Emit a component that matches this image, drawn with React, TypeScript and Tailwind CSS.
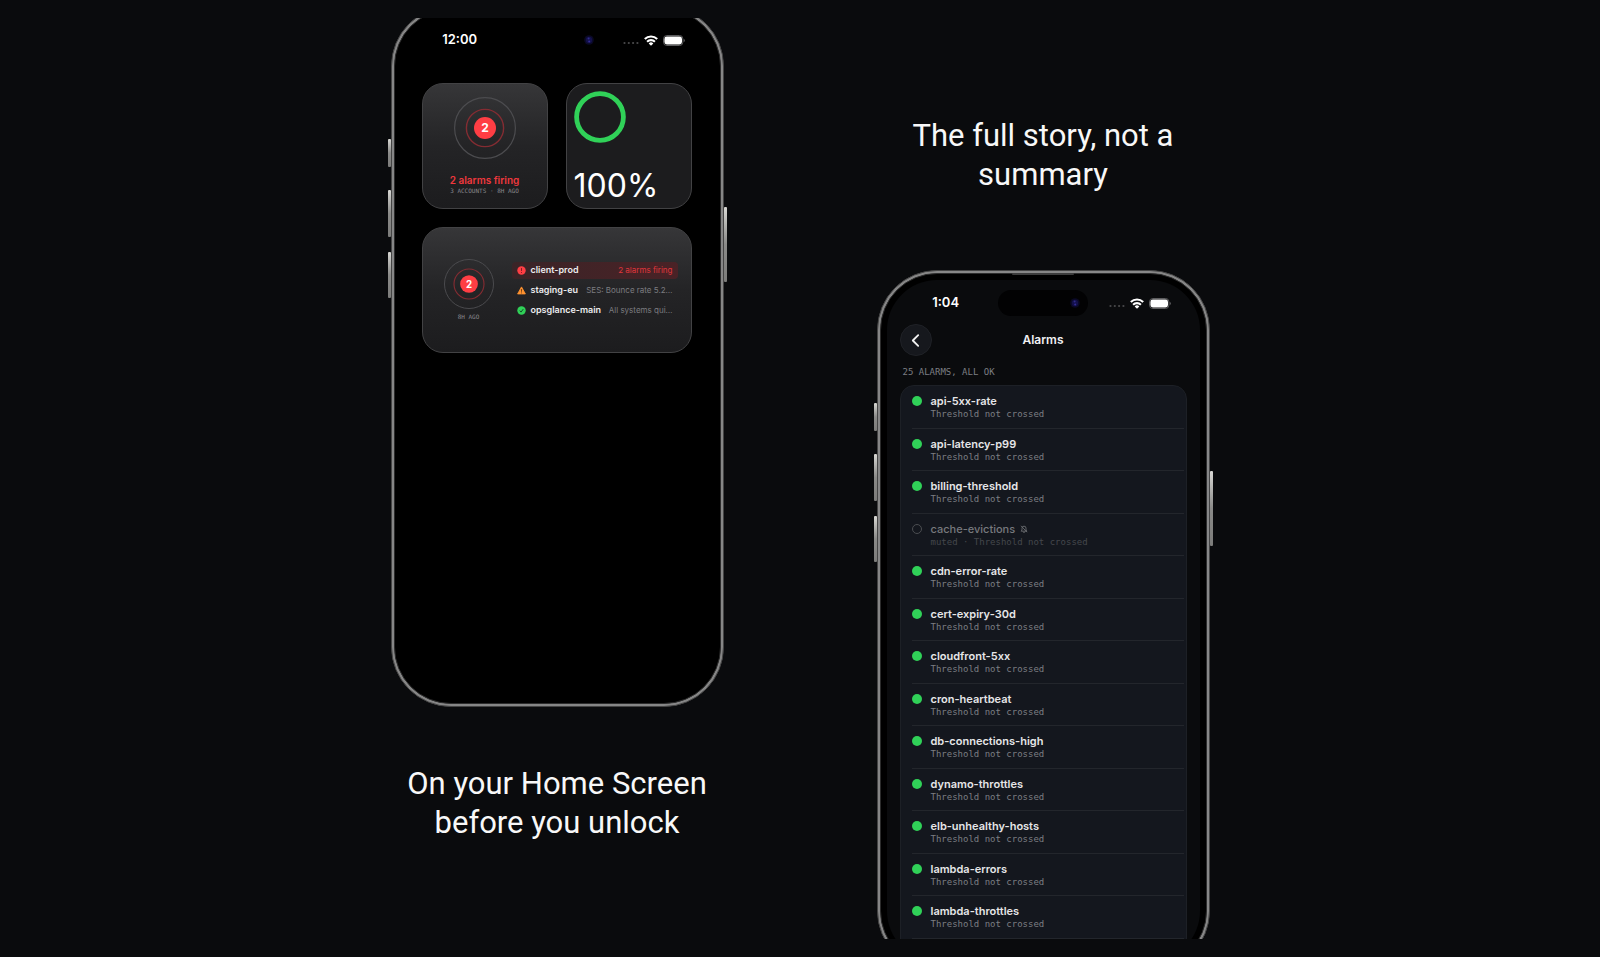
import type { ReactNode } from "react";

const alarms = [
  "api-5xx-rate",
  "api-latency-p99",
  "billing-threshold",
  "cache-evictions",
  "cdn-error-rate",
  "cert-expiry-30d",
  "cloudfront-5xx",
  "cron-heartbeat",
  "db-connections-high",
  "dynamo-throttles",
  "elb-unhealthy-hosts",
  "lambda-errors",
  "lambda-throttles",
];
const mutedAlarms = new Set(["cache-evictions"]);

function StatusBar({ time, island }: { time: string; island: string }) {
  return (
    <div className="grid h-[26px] shrink-0 grid-cols-3 items-center text-white">
      <span className="pl-[14px] text-center text-[13px] font-semibold">{time}</span>
      <span className={`flex h-[26px] w-[90px] items-center justify-end justify-self-center rounded-full pr-2 ${island}`}>
        <svg viewBox="0 0 10 10" className="size-[10px]" aria-hidden="true">
          <circle cx="5" cy="5" r="4.8" fill="#0a0924" />
          <circle cx="5" cy="5" r="3.2" fill="#13104a" />
          <circle cx="4.6" cy="3.6" r="1" fill="#302b88" />
          <circle cx="5.2" cy="6.4" r="1" fill="#322c96" />
        </svg>
      </span>
      <span className="flex items-center justify-end gap-[5px] pr-[29px]">
        <svg viewBox="0 0 16 12" className="h-3 w-4" aria-hidden="true" fill="#4a4a4c">
          <circle cx="1.5" cy="9" r="1.1" />
          <circle cx="5.8" cy="9" r="1.1" />
          <circle cx="10.1" cy="9" r="1.1" />
          <circle cx="14.4" cy="9" r="1.1" />
        </svg>
        <svg viewBox="0 0 14 11" className="h-[11px] w-[14px]" aria-hidden="true" fill="none" stroke="#fff" strokeWidth="2.1">
          <path d="M0.8 4.1a8.8 8.8 0 0 1 12.4 0" />
          <path d="M3.1 6.7a5.6 5.6 0 0 1 7.8 0" />
          <path d="M7 10.8 4.7 8.4a3.2 3.2 0 0 1 4.6 0z" fill="#fff" stroke="none" />
        </svg>
        <svg viewBox="0 0 22 11" className="h-[11px] w-[22px]" aria-hidden="true">
          <rect x="0.5" y="0.5" width="19.4" height="10" rx="3.4" fill="none" stroke="#5c5c5e" />
          <rect x="1.4" y="1.6" width="17.6" height="7.8" rx="2.4" fill="#fff" />
          <path d="M20.8 3.8v3.4a2 2 0 0 0 0-3.4z" fill="#6a6a6c" />
        </svg>
      </span>
    </div>
  );
}

function SideButton({ place }: { place: string }) {
  return <span className={`absolute w-[3px] rounded-[1px] bg-linear-to-b from-[#d8d8d4] via-[#8a8a88] to-[#7c7c7a] ${place}`} />;
}

function Phone({ screen, children, className = "" }: { screen: string; children: ReactNode; className?: string }) {
  return (
    <div className={`relative h-[701px] w-[333px] shrink-0 ${className}`}>
      <SideButton place="-left-[3px] top-[133px] h-7" />
      <SideButton place="-left-[3px] top-[184px] h-[47px]" />
      <SideButton place="-left-[3px] top-[246px] h-[46px]" />
      <SideButton place="-right-[3px] top-[201px] h-[75px]" />
      <div className="h-full rounded-[60px] border border-[#444444] bg-[#868686] p-[2px]">
        <div className="h-full rounded-[57px] border border-[#2c2c2c] bg-black p-[6px]">
          <div className={`flex h-full flex-col overflow-hidden rounded-[50px] ${screen}`}>{children}</div>
        </div>
      </div>
      <span className="absolute inset-x-0 top-[3px] mx-auto h-[2px] w-[62px] rounded-full bg-[#3c3c3c]" />
    </div>
  );
}

function Radar({ size }: { size: string }) {
  return (
    <svg viewBox="0 0 62 62" className={size} role="img" aria-label="2 alarms">
      <circle cx="31" cy="31" r="30.4" fill="none" stroke="#4c4c4f" strokeWidth="1.2" />
      <circle cx="31" cy="31" r="18.6" fill="none" stroke="#842c32" strokeWidth="1.4" />
      <circle cx="31" cy="31" r="11" fill="#ff3e44" />
      <text x="31" y="35.4" textAnchor="middle" fill="#fff" fontSize="12" fontWeight="700" fontFamily="Inter, sans-serif">
        2
      </text>
    </svg>
  );
}

const card = "rounded-[21px] border border-[#424244]";
const glass = "bg-linear-to-b from-[#363638] via-[#242426] to-[#1c1c1e]";
const mono = "font-['DejaVu_Sans_Mono',monospace]";

function AccountIcon({ kind }: { kind: string }) {
  return (
    <svg viewBox="0 0 10 10" className="size-[9px] shrink-0" aria-hidden="true">
      {kind === "alarm" && (
        <>
          <circle cx="5" cy="5" r="4.7" fill="#ff3e44" />
          <path d="M5 2.3v3.2M5 6.7v1" stroke="#7c2024" strokeWidth="1.1" />
        </>
      )}
      {kind === "warn" && (
        <>
          <path d="M5 1 9.3 8.8H0.7z" fill="#ff9230" stroke="#ff9230" strokeWidth="1" strokeLinejoin="round" />
          <path d="M5 3.4v3M5 7.2v1" stroke="#6b3a12" strokeWidth="1" />
        </>
      )}
      {kind === "ok" && (
        <>
          <circle cx="5" cy="5" r="4.7" fill="#30d158" />
          <path d="m3 5.2 1.5 1.6L7 3.4" stroke="#14532a" strokeWidth="1.1" fill="none" />
        </>
      )}
    </svg>
  );
}

function AccountRow({ kind, name, note }: { kind: string; name: string; note: string }) {
  const firing = kind === "alarm";
  return (
    <li className={`flex h-[17px] items-center rounded-[4px] px-[5px] ${firing ? "bg-linear-to-r from-[#3a2427] to-[#4a2226]" : ""}`}>
      <AccountIcon kind={kind} />
      <span className="ml-[5px] text-[9px] font-semibold text-[#ececee]">{name}</span>
      <span className={`ml-auto text-[8px] ${firing ? "text-[#e0363c]" : "text-[#7c7c80]"}`}>{note}</span>
    </li>
  );
}

function HomeScreen() {
  return (
    <>
      <div className="pt-[11px]">
        <StatusBar time="12:00" island="bg-black" />
      </div>
      <div className="grid grid-cols-2 gap-[18px] pt-[30px] pr-[22px] pl-[21px]">
        <div className={`flex h-[126px] flex-col items-center ${card} ${glass}`}>
          <Radar size="mt-[13px] size-[62px]" />
          <p className="mt-[15px] text-[10px] leading-3 font-semibold text-[#ee383d]">2 alarms firing</p>
          <p className={`text-[6px] leading-[10px] text-[#88888c] ${mono}`}>3 ACCOUNTS · 8H AGO</p>
        </div>
        <div className={`flex h-[126px] flex-col justify-between bg-[#1c1c1e] px-[7px] pt-[7px] pb-1 ${card}`}>
          <svg viewBox="0 0 52 52" className="size-[52px]" aria-hidden="true">
            <circle cx="26" cy="26" r="23.4" fill="none" stroke="#30d158" strokeWidth="4.8" />
          </svg>
          <p className="text-[32px] leading-9 text-white">100%</p>
        </div>
        <div className={`col-span-2 flex h-[126px] items-center pr-[13px] pl-[21px] ${card} ${glass}`}>
          <div className="flex flex-col items-center">
            <Radar size="size-[50px]" />
            <p className={`mt-1 text-[6px] leading-2 text-[#88888c] ${mono}`}>8H AGO</p>
          </div>
          <ul className="ml-[18px] flex grow flex-col gap-[3px]">
            <AccountRow kind="alarm" name="client-prod" note="2 alarms firing" />
            <AccountRow kind="warn" name="staging-eu" note="SES: Bounce rate 5.2…" />
            <AccountRow kind="ok" name="opsglance-main" note="All systems qui…" />
          </ul>
        </div>
      </div>
    </>
  );
}

function AlarmRow({ name, muted }: { name: string; muted: boolean }) {
  return (
    <li className="flex h-[43px] shrink-0 pr-[2px] pl-[11px] even:h-[42px]">
      <span className={`mt-[10px] size-[10px] shrink-0 rounded-full ${muted ? "border border-[#4b4d51]" : "bg-[#30d158]"}`} />
      <div className="-ml-[10px] grow border-b border-[#23262c] pt-2 pl-[19px]">
        <p className={`flex items-center gap-[5px] text-[11px] leading-[14px] ${muted ? "font-medium text-[#77797d]" : "font-semibold text-[#e6e6e8]"}`}>
          {name}
          {muted && (
            <svg viewBox="0 0 8 8" className="size-2" aria-hidden="true" fill="none" stroke="#6c6e72" strokeWidth="0.9">
              <path d="M1.2 6.2h5.6L6 5V3.2a2 2 0 0 0-4 0V5zM3.2 7.3h1.6M1 .8l6 6.4" />
            </svg>
          )}
        </p>
        <p className={`text-[9px] leading-[13px] ${mono} ${muted ? "text-[#44474c]" : "text-[#7c7e83]"}`}>
          {muted ? "muted · Threshold not crossed" : "Threshold not crossed"}
        </p>
      </div>
    </li>
  );
}

function AlarmsScreen() {
  return (
    <>
      <div className="pt-[10px]">
        <StatusBar time="1:04" island="bg-[#020203]" />
      </div>
      <header className="mt-2 grid grid-cols-3 items-center px-[13px]">
        <button type="button" aria-label="Back" className="flex size-8 items-center justify-center rounded-full border border-[#202227] bg-[#16181d]">
          <svg viewBox="0 0 10 16" className="h-[15px] w-[9px]" aria-hidden="true" fill="none" stroke="#f2f2f2" strokeWidth="2" strokeLinecap="round" strokeLinejoin="round">
            <path d="M8 2 2 8l6 6" />
          </svg>
        </button>
        <h3 className="text-center text-[12px] font-semibold text-[#f0f0f2]">Alarms</h3>
      </header>
      <p className={`mt-[10px] px-4 text-[9px] leading-3 text-[#7c7e83] ${mono}`}>25 ALARMS, ALL OK</p>
      <ul className="mx-[13px] mt-[7px] flex flex-col rounded-t-[14px] border border-[#1d2026] bg-[#14171e]">
        {alarms.map((name) => (
          <AlarmRow key={name} name={name} muted={mutedAlarms.has(name)} />
        ))}
      </ul>
    </>
  );
}

const caption = "px-20 text-center font-['Roboto',sans-serif] text-[31px] leading-[39px] text-[#f8f8f8]";

export default function App() {
  return (
    <main className="flex h-screen justify-center overflow-hidden bg-[#0a0b0d] py-[18px] font-['Inter',sans-serif]">
      <section className="flex w-[486px] flex-col items-center overflow-hidden">
        <Phone className="-mt-3" screen="bg-black">
          <HomeScreen />
        </Phone>
        <h2 className={`mt-[57px] ${caption}`}>On your Home Screen before you unlock</h2>
      </section>
      <section className="flex w-[486px] flex-col items-center overflow-hidden">
        <h2 className={`mt-[98px] mb-[76px] ${caption}`}>The full story, not a summary</h2>
        <Phone screen="bg-[#0a0b0d]">
          <AlarmsScreen />
        </Phone>
      </section>
    </main>
  );
}
